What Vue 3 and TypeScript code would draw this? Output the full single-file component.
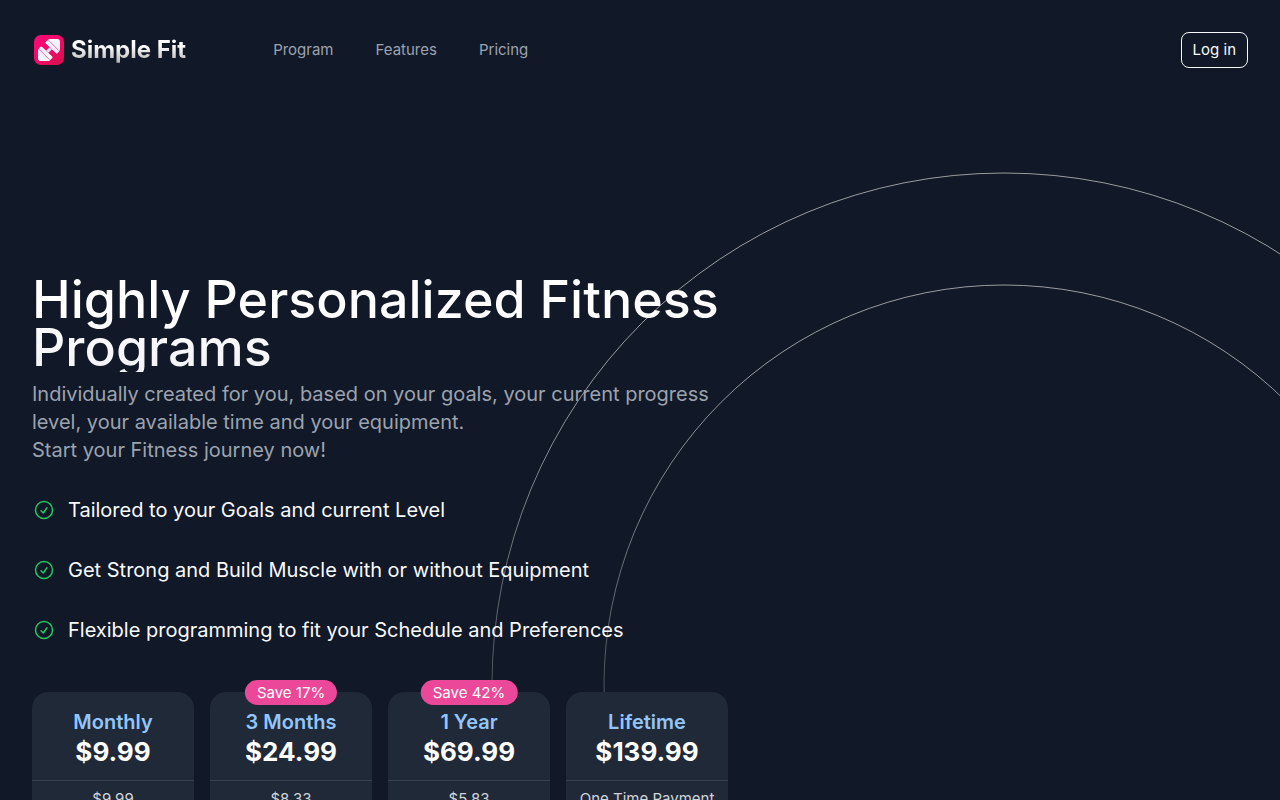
<script setup lang="ts">
interface Plan {
  name: string
  price: string
  detail: string
  badge?: string
}

const links: string[] = ['Program', 'Features', 'Pricing']

const features: string[] = [
  'Tailored to your Goals and current Level',
  'Get Strong and Build Muscle with or without Equipment',
  'Flexible programming to fit your Schedule and Preferences',
]

const plans: Plan[] = [
  { name: 'Monthly', price: '$9.99', detail: '$9.99' },
  { name: '3 Months', price: '$24.99', detail: '$8.33', badge: 'Save 17%' },
  { name: '1 Year', price: '$69.99', detail: '$5.83', badge: 'Save 42%' },
  { name: 'Lifetime', price: '$139.99', detail: 'One Time Payment' },
]
</script>

<template>
  <div class="page">
    <header class="header">
      <a class="brand" href="#" aria-label="Simple Fit">
        <svg class="brand-mark" viewBox="0 0 34 34" aria-hidden="true">
          <defs>
            <linearGradient id="markFill" x1="0" y1="0" x2="1" y2="1">
              <stop offset="0" stop-color="#ff0a78" />
              <stop offset="0.5" stop-color="#f6086a" />
              <stop offset="1" stop-color="#cf1248" />
            </linearGradient>
            <linearGradient id="plateFill" x1="0" y1="0" x2="1" y2="1">
              <stop offset="0" stop-color="#ffffff" />
              <stop offset="1" stop-color="#e4e8fa" />
            </linearGradient>
          </defs>
          <rect x="2" y="2" width="30" height="30" rx="7" fill="url(#markFill)" />
          <path d="M17.6 14.2L19.8 16.4 16.4 19.8 14.2 17.6z" fill="#dfe3f7" />
          <g>
            <path
              d="M13.8 9L15.8 7Q16.6 6 17.8 6H25.2Q28 6 28 8.8V16.2Q28 17.4 27 18.4L25.8 20Q24.8 21 23.8 20L13.8 10.4Q13 9.7 13.8 9z"
              fill="url(#plateFill)"
            />
            <path d="M16.6 7.4L26.8 17.6" stroke="#f0357f" stroke-width="0.7" />
          </g>
          <g transform="rotate(180 17 17)">
            <path
              d="M13.8 9L15.8 7Q16.6 6 17.8 6H25.2Q28 6 28 8.8V16.2Q28 17.4 27 18.4L25.8 20Q24.8 21 23.8 20L13.8 10.4Q13 9.7 13.8 9z"
              fill="url(#plateFill)"
            />
            <path d="M16.6 7.4L26.8 17.6" stroke="#f0357f" stroke-width="0.7" />
          </g>
        </svg>
        <span class="brand-name">Simple Fit</span>
      </a>
      <nav class="nav" aria-label="Main">
        <a v-for="link in links" :key="link" :href="'#' + link.toLowerCase()">{{ link }}</a>
      </nav>
      <a class="login" href="#login">Log in</a>
    </header>

    <main class="hero">
      <section class="copy">
        <h1>Highly Personalized Fitness Programs</h1>
        <p class="lead">
          Individually created for you, based on your goals, your current progress level, your
          available time and your equipment.<br />Start your Fitness journey now!
        </p>
        <ul class="features">
          <li v-for="feature in features" :key="feature">
            <svg viewBox="0 0 24 24" aria-hidden="true">
              <circle cx="12" cy="12" r="8.5" />
              <path d="M9 12.75L11.25 15 15 9.75" />
            </svg>
            <span>{{ feature }}</span>
          </li>
        </ul>
        <div class="plans">
          <article v-for="plan in plans" :key="plan.name" class="plan">
            <span v-if="plan.badge" class="badge">{{ plan.badge }}</span>
            <div class="plan-head">
              <h2>{{ plan.name }}</h2>
              <p class="price">{{ plan.price }}</p>
            </div>
            <p class="detail">{{ plan.detail }}</p>
          </article>
        </div>
      </section>
      <div class="art" aria-hidden="true">
        <svg class="rings" viewBox="0 0 1026 1026">
          <circle cx="513" cy="513" r="512" />
          <circle cx="513" cy="513" r="400" />
        </svg>
      </div>
    </main>
  </div>
</template>

<style>
body {
  margin: 0;
  background: #111827;
}
</style>

<style scoped>
.page {
  min-height: 100vh;
  background: #111827;
  color: #f9fafb;
  font-family: Inter, 'Liberation Sans', sans-serif;
}

h1,
h2,
p,
ul {
  margin: 0;
  padding: 0;
}

a {
  color: inherit;
  text-decoration: none;
}

.header {
  display: flex;
  align-items: center;
  padding: 32px;
}

.brand {
  display: flex;
  align-items: center;
  gap: 5px;
}

.brand-mark {
  width: 34px;
  height: 34px;
}

.brand-name {
  font-size: 24px;
  line-height: 32px;
  font-weight: 700;
  background: linear-gradient(#ffffff 35%, #a8a8a8);
  background-clip: text;
  -webkit-background-clip: text;
  color: transparent;
}

.nav {
  display: flex;
  gap: 42px;
  margin-left: 87px;
  color: #9ca3af;
  font-size: 15px;
  line-height: 20px;
}

.login {
  margin-left: auto;
  padding: 7px 11px;
  border: 1px solid #f9fafb;
  border-radius: 8px;
  font-size: 15px;
  line-height: 20px;
}

.hero {
  display: grid;
  grid-template-columns: repeat(12, minmax(0, 1fr));
  column-gap: 32px;
  padding: 176px 32px 64px;
  overflow: hidden;
}

.copy {
  position: relative;
  z-index: 1;
  grid-column: span 7;
}

h1 {
  font-size: 52px;
  line-height: 48px;
  font-weight: 500;
  background: linear-gradient(#ffffff 40%, #f1f2f5);
  background-clip: text;
  -webkit-background-clip: text;
  color: transparent;
}

.lead {
  margin-top: 8px;
  color: #9ca3af;
  font-size: 20px;
  line-height: 28px;
}

.features {
  display: grid;
  gap: 32px;
  margin-top: 32px;
  list-style: none;
  font-size: 20px;
  line-height: 28px;
}

.features li {
  display: flex;
  align-items: center;
  gap: 12px;
}

.features svg {
  flex: none;
  width: 24px;
  height: 24px;
  fill: none;
  stroke: #22c55e;
  stroke-width: 1.5;
  stroke-linecap: round;
  stroke-linejoin: round;
}

.plans {
  display: grid;
  grid-template-columns: repeat(4, minmax(0, 1fr));
  gap: 16px;
  margin-top: 48px;
}

.plan {
  position: relative;
  border-radius: 16px;
  background: #1f2937;
  text-align: center;
}

.plan-head {
  padding: 16px 8px 12px;
  border-bottom: 1px solid #374151;
}

h2 {
  color: #93c5fd;
  font-size: 20px;
  line-height: 28px;
  font-weight: 600;
}

.price {
  color: #ffffff;
  font-size: 26px;
  line-height: 32px;
  font-weight: 700;
}

.detail {
  padding: 8px 8px 24px;
  color: #d1d5db;
  font-size: 15px;
  line-height: 20px;
  white-space: nowrap;
}

.badge {
  position: absolute;
  top: -12px;
  left: 50%;
  padding: 3px 12px 2px;
  border-radius: 13px;
  background: #ec4899;
  color: #ffffff;
  font-size: 15px;
  line-height: 20px;
  white-space: nowrap;
  transform: translateX(-50%);
}

.art {
  position: relative;
  grid-column: span 5;
}

.rings {
  position: absolute;
  top: -104px;
  left: 50%;
  width: 1026px;
  height: 1026px;
  fill: none;
  stroke: #d4d4d4;
  stroke-opacity: 0.7;
  transform: translateX(-50%);
  mask-image: linear-gradient(to bottom, #ffffff 20%, transparent 75%);
}
</style>
